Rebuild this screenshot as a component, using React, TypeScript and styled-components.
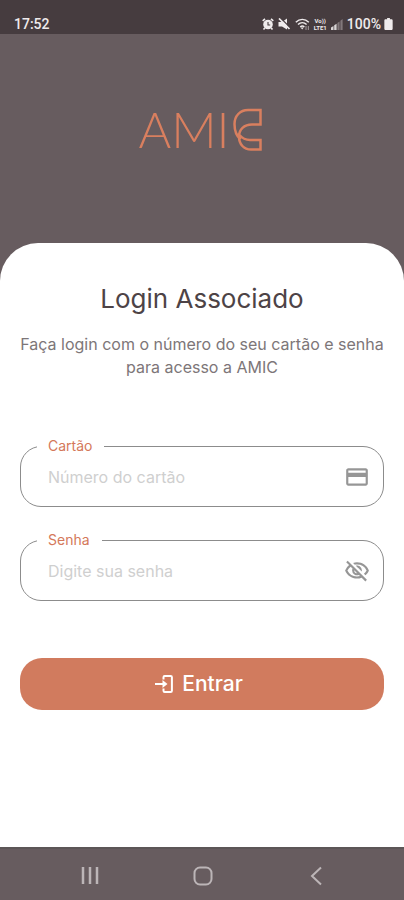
import React from "react";
import styled, { createGlobalStyle } from "styled-components";
import { MdOutlineCreditCard, MdOutlineVisibilityOff } from "react-icons/md";

const GlobalStyle = createGlobalStyle`
  *, *::before, *::after { box-sizing: border-box; }
  body { margin: 0; background: #675c5f; font-family: "Inter", "Open Sans", sans-serif; }
`;

const Screen = styled.div`
  display: flex;
  flex-direction: column;
  min-height: 100vh;
  background: #675c5f;
`;

const StatusBar = styled.header`
  display: flex;
  align-items: center;
  justify-content: space-between;
  height: 34px;
  padding: 14px 11px 0 14px;
  background: #463c3f;
  color: #efebec;
  font: 500 14px/20px Roboto, sans-serif;
`;

const StatusIcons = styled.div`
  display: flex;
  align-items: center;
  gap: 4px;
  svg { display: block; }
`;

const Battery = styled.span`
  display: flex;
  align-items: center;
  gap: 3px;
`;

const Network = styled.span`
  display: grid;
  font: 700 6px/7px Roboto, sans-serif;
  text-align: center;
`;

const Hero = styled.div`
  display: flex;
  justify-content: center;
  padding: 74px 4px 92px 0;
`;

const Brand = styled.div`
  display: flex;
  align-items: center;
  gap: 3px;
  height: 43px;
  color: #d97f5f;
  font: 300 50px/43px "Lato", sans-serif;
  svg { display: block; }
`;

const Sheet = styled.main`
  flex: 1;
  display: flex;
  flex-direction: column;
  padding: 38px 20px;
  background: #fff;
  border-radius: 38px 38px 0 0;
`;

const Title = styled.h1`
  margin: 0;
  color: #4d4346;
  font-size: 26px;
  font-weight: 400;
  line-height: 36px;
  text-align: center;
`;

const Intro = styled.p`
  margin: 16px 0 0;
  color: #7d7678;
  font-size: 16px;
  font-weight: 400;
  line-height: 23px;
  text-align: center;
`;

const Form = styled.form`
  display: flex;
  flex-direction: column;
  gap: 25px;
  margin-top: 59px;
`;

const Field = styled.fieldset`
  display: flex;
  align-items: center;
  min-width: 0;
  height: 69px;
  margin: 0;
  padding: 0 13px 6px 16px;
  border: 1px solid #8c8c8c;
  border-radius: 21px;
`;

const Legend = styled.legend`
  padding: 0 12px 0 11px;
  color: #d4785a;
  font-size: 14px;
  line-height: 16px;
`;

const Input = styled.input`
  flex: 1;
  min-width: 0;
  height: 46px;
  padding: 0 11px;
  border: 0;
  outline: 0;
  background: transparent;
  color: #4d4346;
  font: 400 16px/24px "Inter", sans-serif;
  &::placeholder { color: #cfcfcf; opacity: 1; }
`;

const FieldIcon = styled.span`
  display: flex;
  color: #969696;
`;

const RevealButton = styled.button`
  display: flex;
  padding: 0;
  border: 0;
  background: none;
  color: #969696;
`;

const Submit = styled.button`
  display: flex;
  align-items: center;
  justify-content: center;
  gap: 9px;
  height: 52px;
  margin-top: 32px;
  padding: 0 6px 0 0;
  border: 0;
  border-radius: 22px;
  background: #d17b5e;
  color: #fff;
  font: 500 21px/28px "Inter", sans-serif;
`;

const NavBar = styled.nav`
  display: flex;
  align-items: center;
  justify-content: space-around;
  height: 53px;
  padding: 2px 32px 0 34px;
  border-top: 2px solid #5c5657;
  background: #675c5f;
`;

const NavButton = styled.button`
  display: flex;
  padding: 0;
  border: 0;
  background: none;
  color: #bcb5b7;
`;

const AlarmIcon = () => (
  <svg width="12" height="12" viewBox="0 0 12 12" fill="none" aria-hidden="true">
    <circle cx="6" cy="6.5" r="4.8" fill="currentColor" />
    <path d="M.7 2.8 3 .8M11.3 2.8 9 .8M2.8 10 1.5 11.5M9.2 10l1.3 1.5" stroke="currentColor" strokeWidth="1.6" />
    <path d="M6 4v3h2.2" stroke="#463c3f" strokeWidth="1.1" />
  </svg>
);

const MuteIcon = () => (
  <svg width="13" height="12" viewBox="0 0 13 12" fill="none" aria-hidden="true">
    <path d="M.5 4h3.500L9 .5v11L4 8.500H.5z" fill="currentColor" />
    <path d="m2.500 0 9.500 9.500" stroke="#463c3f" strokeWidth="1.300" />
    <path d="m1 .5 10.500 10.500" stroke="currentColor" strokeWidth="1.700" />
  </svg>
);

const WifiIcon = () => (
  <svg width="15" height="13" viewBox="0 0 15 13" fill="none" aria-hidden="true">
    <path d="M.8 4.2c3.8-3.8 9.2-3.8 13 0M3 6.6c2.5-2.4 6.1-2.4 8.6 0M5.2 8.9c1.3-1.2 2.9-1.2 4.2 0" stroke="currentColor" strokeWidth="1.4" />
    <path d="m7.2 11.5-1.6-2h3.2z" fill="currentColor" />
    <path d="M11 8v4M13.4 8v4" stroke="#91898b" strokeWidth="1.2" />
  </svg>
);

const SignalIcon = () => (
  <svg width="12" height="12" viewBox="0 0 12 12" aria-hidden="true">
    <path d="M0 12V9.5L2.5 8v4zM3.2 12V7.3L5.6 5.8V12z" fill="#d9d5d6" />
    <path d="M6.4 12V5L8.6 3.6V12zM9.4 12V2.8L11.6 1v11z" fill="#81787b" />
  </svg>
);

const BatteryIcon = () => (
  <svg width="9" height="12" viewBox="0 0 9 13" fill="currentColor" aria-hidden="true">
    <path d="M3 0h3v1.4h1.6c.8 0 1.4.6 1.4 1.4v8.8c0 .8-.6 1.4-1.4 1.4H1.4C.6 13 0 12.4 0 11.6V2.8c0-.8.6-1.4 1.4-1.4H3z" />
  </svg>
);

const BrandMark = () => (
  <svg width="29" height="43" viewBox="0 0 29 43" fill="none" stroke="currentColor" strokeWidth="2.500" aria-hidden="true">
    <path d="M7.500 31.500C3.500 28 1.500 22 1.500 16 1.500 8 7 2 15 2h12.500v14.500H19C11 16.500 6 21.500 6 28.500c0 8 5 13 12 13h9.500V32H17c-4.500 0-8-2-10.500-5" />
  </svg>
);

const EnterIcon = () => (
  <svg width="18" height="18" viewBox="0 0 18 18" fill="none" stroke="currentColor" strokeWidth="2" aria-hidden="true">
    <path d="M8.500 4.500V2.200c0-.7.500-1.200 1.200-1.200h6c.7 0 1.200.5 1.200 1.200v13.600c0 .7-.5 1.200-1.200 1.200h-6c-.7 0-1.200-.5-1.200-1.200v-2.300" />
    <path d="M0 9h9" />
    <path d="m7.500 5 5 4-5 4z" fill="currentColor" stroke="none" />
  </svg>
);

export default function App() {
  return (
    <Screen>
      <GlobalStyle />
      <StatusBar>
        <time>17:52</time>
        <StatusIcons>
          <AlarmIcon />
          <MuteIcon />
          <WifiIcon />
          <Network><span>Vo))</span><span>LTE1</span></Network>
          <SignalIcon />
          <Battery>100%<BatteryIcon /></Battery>
        </StatusIcons>
      </StatusBar>
      <Hero>
        <Brand role="img" aria-label="AMIC">
          <span>AMI</span>
          <BrandMark />
        </Brand>
      </Hero>
      <Sheet>
        <Title>Login Associado</Title>
        <Intro>Faça login com o número do seu cartão e senha para acesso a AMIC</Intro>
        <Form onSubmit={(event) => event.preventDefault()}>
          <Field>
            <Legend><label htmlFor="card">Cartão</label></Legend>
            <Input id="card" type="text" inputMode="numeric" placeholder="Número do cartão" />
            <FieldIcon><MdOutlineCreditCard size={26} /></FieldIcon>
          </Field>
          <Field>
            <Legend><label htmlFor="password">Senha</label></Legend>
            <Input id="password" type="password" placeholder="Digite sua senha" />
            <RevealButton type="button" aria-label="Mostrar senha"><MdOutlineVisibilityOff size={26} /></RevealButton>
          </Field>
          <Submit type="submit"><EnterIcon />Entrar</Submit>
        </Form>
      </Sheet>
      <NavBar>
        <NavButton type="button" aria-label="Recentes">
          <svg width="20" height="20" viewBox="0 0 20 20" stroke="currentColor" strokeWidth="2.500"><path d="M3 1v17M10 1v17M17 1v17" /></svg>
        </NavButton>
        <NavButton type="button" aria-label="Início">
          <svg width="20" height="20" viewBox="0 0 20 20" fill="none" stroke="currentColor" strokeWidth="2"><rect x="1.500" y="1.500" width="17" height="17" rx="5.500" /></svg>
        </NavButton>
        <NavButton type="button" aria-label="Voltar">
          <svg width="20" height="20" viewBox="0 0 20 20" fill="none" stroke="currentColor" strokeWidth="2"><path d="M15 1.500 6 10l9 8.500" /></svg>
        </NavButton>
      </NavBar>
    </Screen>
  );
}
